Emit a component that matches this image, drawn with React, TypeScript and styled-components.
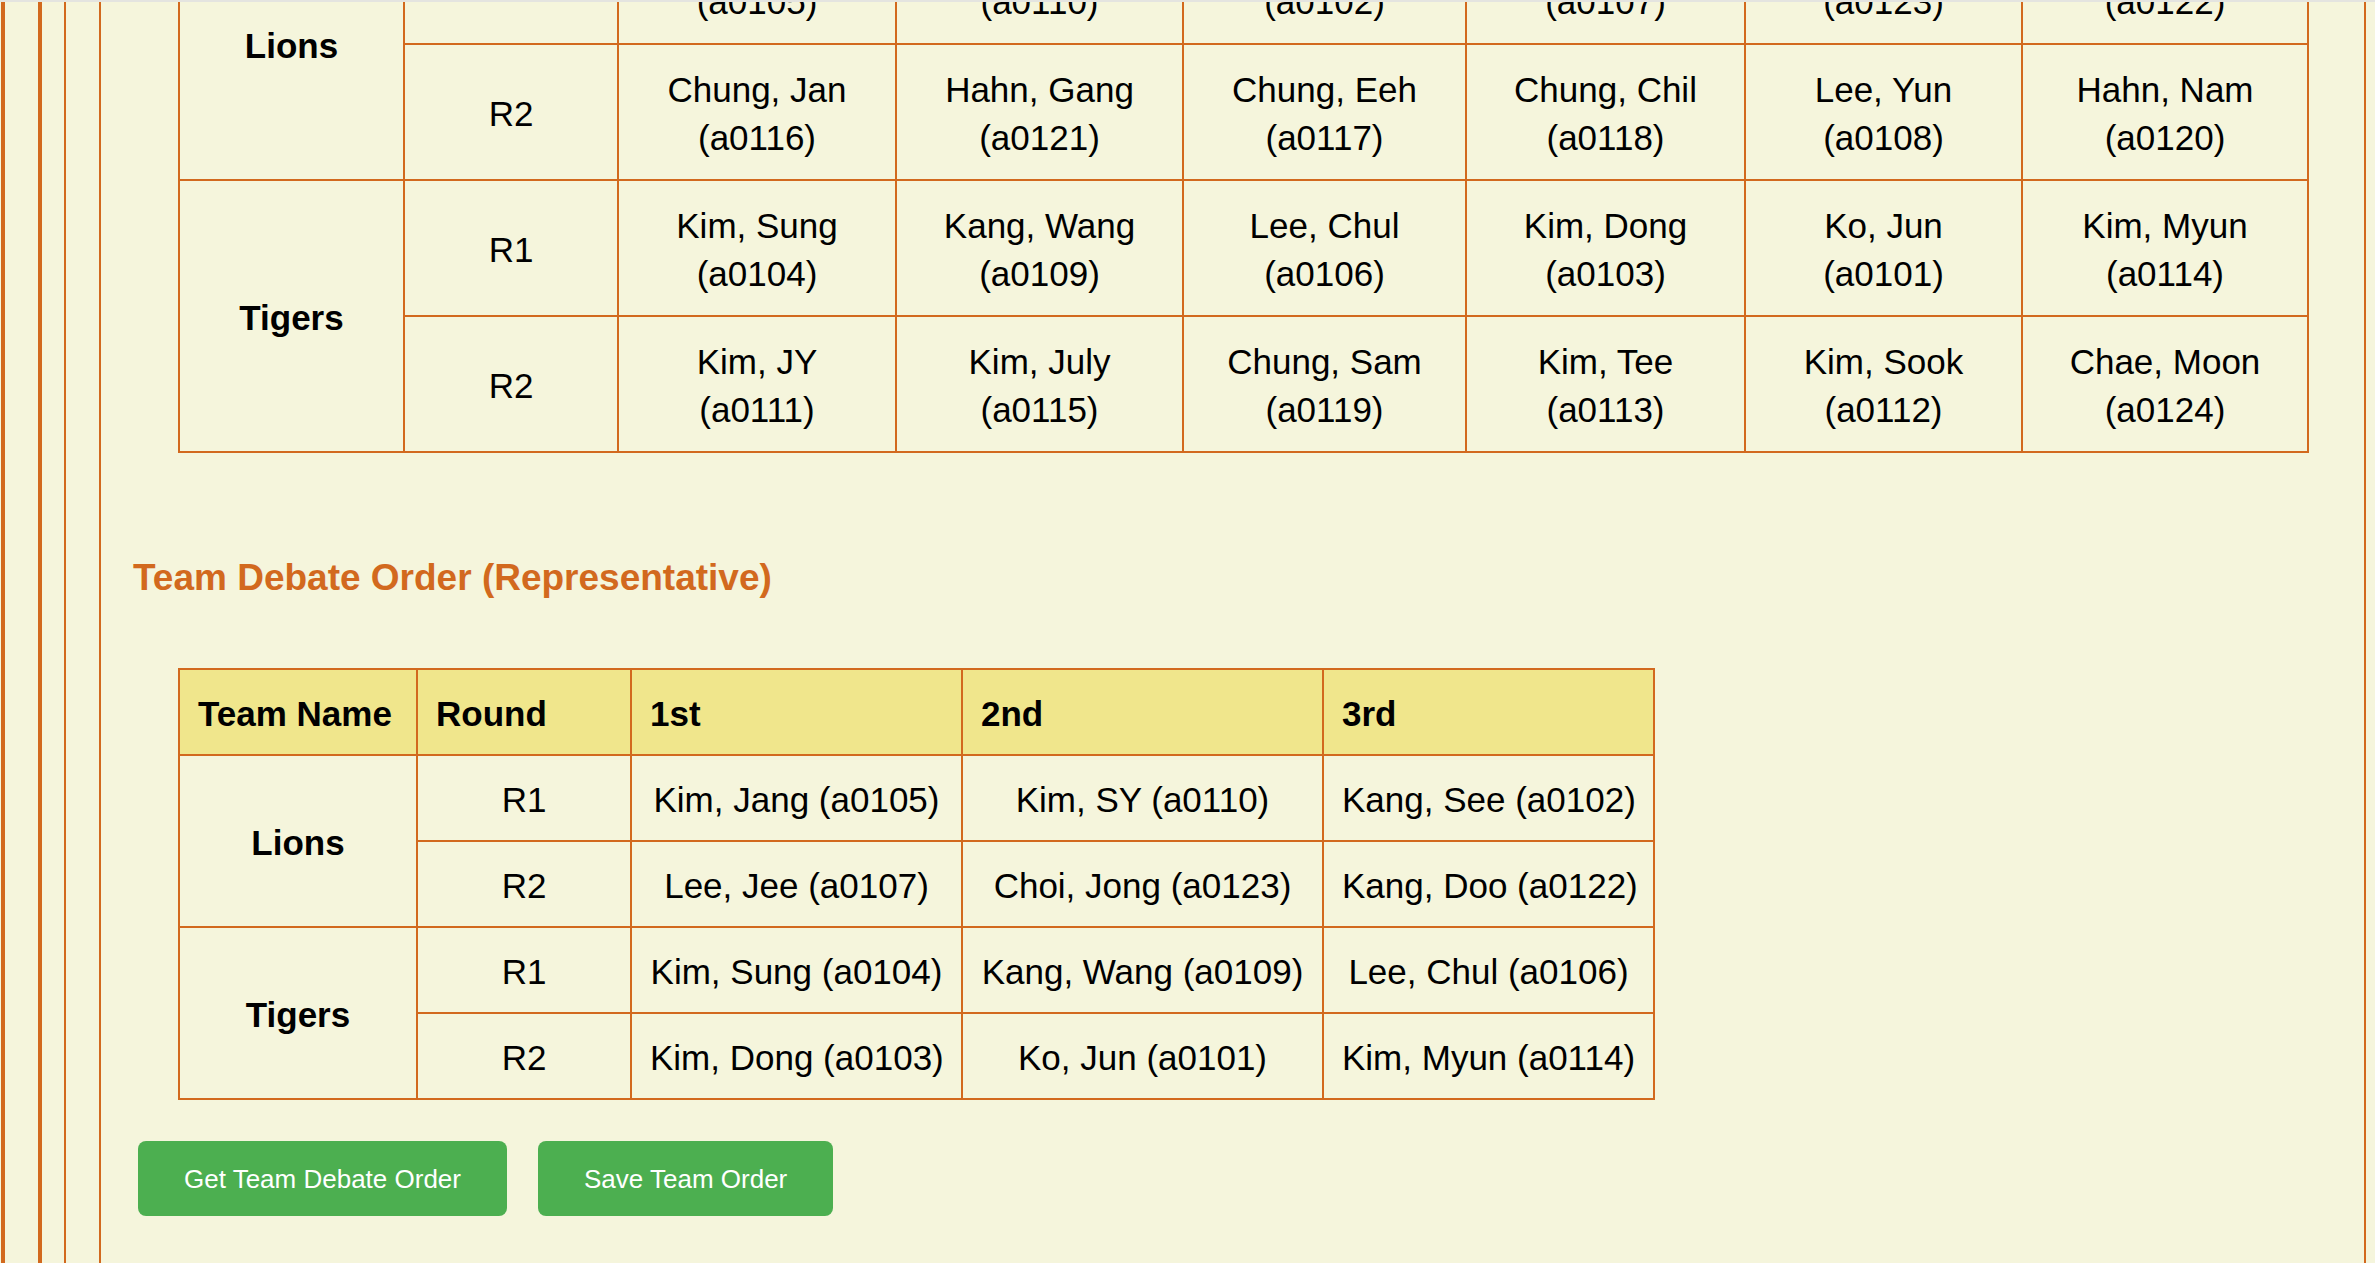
import { useLayoutEffect, useRef } from "react";
import styled, { createGlobalStyle } from "styled-components";

const GlobalStyle = createGlobalStyle`
  html, body {
    margin: 0;
    padding: 0;
    height: 100%;
    overflow: hidden;
    background: #f5f5dc;
  }
  body {
    font-family: "Comic Sans MS", "Liberation Sans", Arial, sans-serif;
    color: #000;
  }
  *, *::before, *::after {
    box-sizing: border-box;
  }
`;

const TopEdge = styled.div`
  height: 2px;
  background: #e4e4e0;
`;

// the page is scrolled to its end, like the screenshot
const Scroller = styled.div`
  height: calc(100vh - 2px);
  overflow-y: auto;
  overflow-x: hidden;
  scrollbar-width: none;
  &::-webkit-scrollbar {
    display: none;
  }
`;

interface RailProps {
  $line: number;
  $pad: number;
  $offset?: number;
}

const Rail = styled.div<RailProps>`
  margin-left: ${(p) => p.$offset ?? 0}px;
  border-left: ${(p) => p.$line}px solid #d2691e;
  padding-left: ${(p) => p.$pad}px;
`;

const Panel = styled.section`
  border-left: 2px solid #d2691e;
  border-right: 2px solid #d2691e;
  margin-right: 9px;
  padding: 30px 0 47px 32px;
`;

const Title = styled.h3`
  margin: 0 0 30px;
  font-size: 37px;
  line-height: 1.2;
  font-weight: bold;
  color: #d2691e;
`;

const SectionTitle = styled(Title)`
  margin: 103px 0 67.6px;
`;

interface GridProps {
  $width: number;
}

const Grid = styled.table<GridProps>`
  width: ${(p) => p.$width}px;
  margin-left: 45px;
  table-layout: fixed;
  border-collapse: separate;
  border-spacing: 0;
  border-top: 2px solid #d2691e;
  border-left: 2px solid #d2691e;
  font-size: 35px;
  line-height: 48px;
`;

interface CellProps {
  $tall?: boolean;
}

const Head = styled.th<CellProps>`
  background: #f0e68c;
  text-align: left;
  font-weight: bold;
  white-space: nowrap;
  padding: 20px 18px 16px;
  border-right: 2px solid #d2691e;
  border-bottom: 2px solid #d2691e;
`;

const Cell = styled.td<CellProps>`
  text-align: center;
  vertical-align: middle;
  white-space: nowrap;
  padding: ${(p) => (p.$tall ? "21px 18px 17px" : "20px 18px 16px")};
  border-right: 2px solid #d2691e;
  border-bottom: 2px solid #d2691e;
`;

const TeamCell = styled(Cell)`
  font-weight: bold;
`;

const ButtonRow = styled.div`
  display: flex;
  gap: 31px;
  margin: 41px 0 0 5px;
`;

const ActionButton = styled.button`
  font-family: "Liberation Sans", Arial, sans-serif;
  font-size: 26px;
  line-height: 30px;
  padding: 22.5px 46px;
  color: #fff;
  background: #4caf50;
  border: none;
  border-radius: 8px;
  cursor: pointer;
`;

type Member = [string, string];

interface Squad {
  team: string;
  rounds: { round: string; members: Member[] }[];
}

const allOrder: Squad[] = [
  {
    team: "Lions",
    rounds: [
      {
        round: "R1",
        members: [
          ["Kim, Jang", "a0105"],
          ["Kim, SY", "a0110"],
          ["Kang, See", "a0102"],
          ["Lee, Jee", "a0107"],
          ["Choi, Jong", "a0123"],
          ["Kang, Doo", "a0122"],
        ],
      },
      {
        round: "R2",
        members: [
          ["Chung, Jan", "a0116"],
          ["Hahn, Gang", "a0121"],
          ["Chung, Eeh", "a0117"],
          ["Chung, Chil", "a0118"],
          ["Lee, Yun", "a0108"],
          ["Hahn, Nam", "a0120"],
        ],
      },
    ],
  },
  {
    team: "Tigers",
    rounds: [
      {
        round: "R1",
        members: [
          ["Kim, Sung", "a0104"],
          ["Kang, Wang", "a0109"],
          ["Lee, Chul", "a0106"],
          ["Kim, Dong", "a0103"],
          ["Ko, Jun", "a0101"],
          ["Kim, Myun", "a0114"],
        ],
      },
      {
        round: "R2",
        members: [
          ["Kim, JY", "a0111"],
          ["Kim, July", "a0115"],
          ["Chung, Sam", "a0119"],
          ["Kim, Tee", "a0113"],
          ["Kim, Sook", "a0112"],
          ["Chae, Moon", "a0124"],
        ],
      },
    ],
  },
];

const repOrder: Squad[] = [
  {
    team: "Lions",
    rounds: [
      {
        round: "R1",
        members: [
          ["Kim, Jang", "a0105"],
          ["Kim, SY", "a0110"],
          ["Kang, See", "a0102"],
        ],
      },
      {
        round: "R2",
        members: [
          ["Lee, Jee", "a0107"],
          ["Choi, Jong", "a0123"],
          ["Kang, Doo", "a0122"],
        ],
      },
    ],
  },
  {
    team: "Tigers",
    rounds: [
      {
        round: "R1",
        members: [
          ["Kim, Sung", "a0104"],
          ["Kang, Wang", "a0109"],
          ["Lee, Chul", "a0106"],
        ],
      },
      {
        round: "R2",
        members: [
          ["Kim, Dong", "a0103"],
          ["Ko, Jun", "a0101"],
          ["Kim, Myun", "a0114"],
        ],
      },
    ],
  },
];

const ordinals = ["1st", "2nd", "3rd", "4th", "5th", "6th"];

interface OrderTableProps {
  squads: Squad[];
  cols: number[];
  stacked?: boolean;
}

function OrderTable({ squads, cols, stacked }: OrderTableProps) {
  const slots = cols.length - 2;
  const width = cols.reduce((a, b) => a + b, 0) + 2;
  return (
    <Grid $width={width}>
      <colgroup>
        {cols.map((w, i) => (
          <col key={i} style={{ width: w }} />
        ))}
      </colgroup>
      <thead>
        <tr>
          <Head>Team Name</Head>
          <Head>Round</Head>
          {ordinals.slice(0, slots).map((o) => (
            <Head key={o}>{o}</Head>
          ))}
        </tr>
      </thead>
      <tbody>
        {squads.map((squad) =>
          squad.rounds.map((r, i) => (
            <tr key={squad.team + r.round}>
              {i === 0 && (
                <TeamCell rowSpan={squad.rounds.length} $tall={stacked}>
                  {squad.team}
                </TeamCell>
              )}
              <Cell $tall={stacked}>{r.round}</Cell>
              {r.members.map(([name, id]) => (
                <Cell key={id} $tall={stacked}>
                  {stacked ? (
                    <>
                      {name}
                      <br />({id})
                    </>
                  ) : (
                    `${name} (${id})`
                  )}
                </Cell>
              ))}
            </tr>
          ))
        )}
      </tbody>
    </Grid>
  );
}

export default function App() {
  const scroller = useRef<HTMLDivElement>(null);

  useLayoutEffect(() => {
    const el = scroller.current;
    if (el) el.scrollTop = el.scrollHeight;
  }, []);

  return (
    <>
      <GlobalStyle />
      <TopEdge />
      <Scroller ref={scroller}>
        <Rail $line={4} $pad={33} $offset={1}>
          <Rail $line={4} $pad={22}>
            <Rail $line={2} $pad={33}>
              <Panel>
                <Title>Team Debate Order (All Members)</Title>
                <OrderTable
                  squads={allOrder}
                  cols={[225, 214, 278, 287, 283, 279, 277, 286]}
                  stacked
                />
                <SectionTitle>Team Debate Order (Representative)</SectionTitle>
                <OrderTable squads={repOrder} cols={[238, 214, 331, 361, 331]} />
                <ButtonRow>
                  <ActionButton>Get Team Debate Order</ActionButton>
                  <ActionButton>Save Team Order</ActionButton>
                </ButtonRow>
              </Panel>
            </Rail>
          </Rail>
        </Rail>
      </Scroller>
    </>
  );
}
